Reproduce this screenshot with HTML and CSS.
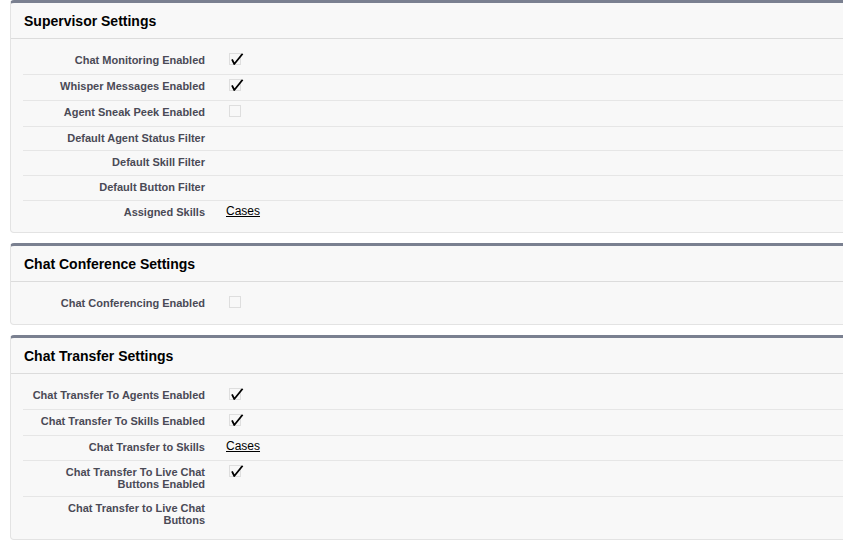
FILE: index.html
```html
<!DOCTYPE html>
<html lang="en">
<head>
    <meta charset="UTF-8">
    <title>Live Agent Settings</title>
    <link rel="stylesheet" href="styles.css">
</head>
<body>

    <div class="panel">
        <div class="panel-header"><h2>Supervisor Settings</h2></div>
        <div class="panel-body">
            <div class="row">
                <div class="label">Chat Monitoring Enabled</div>
                <div class="data"><span class="check on"></span></div>
            </div>
            <div class="row">
                <div class="label">Whisper Messages Enabled</div>
                <div class="data"><span class="check on"></span></div>
            </div>
            <div class="row">
                <div class="label">Agent Sneak Peek Enabled</div>
                <div class="data"><span class="check"></span></div>
            </div>
            <div class="row">
                <div class="label">Default Agent Status Filter</div>
                <div class="data"></div>
            </div>
            <div class="row">
                <div class="label">Default Skill Filter</div>
                <div class="data">&nbsp;</div>
            </div>
            <div class="row">
                <div class="label">Default Button Filter</div>
                <div class="data">&nbsp;</div>
            </div>
            <div class="row">
                <div class="label">Assigned Skills</div>
                <div class="data"><a href="#">Cases</a></div>
            </div>
        </div>
    </div>

    <div class="panel">
        <div class="panel-header"><h2>Chat Conference Settings</h2></div>
        <div class="panel-body">
            <div class="row">
                <div class="label">Chat Conferencing Enabled</div>
                <div class="data"><span class="check"></span></div>
            </div>
        </div>
    </div>

    <div class="panel">
        <div class="panel-header"><h2>Chat Transfer Settings</h2></div>
        <div class="panel-body">
            <div class="row">
                <div class="label">Chat Transfer To Agents Enabled</div>
                <div class="data"><span class="check on"></span></div>
            </div>
            <div class="row">
                <div class="label">Chat Transfer To Skills Enabled</div>
                <div class="data"><span class="check on"></span></div>
            </div>
            <div class="row">
                <div class="label">Chat Transfer to Skills</div>
                <div class="data"><a href="#">Cases</a></div>
            </div>
            <div class="row">
                <div class="label">Chat Transfer To Live Chat Buttons Enabled</div>
                <div class="data"><span class="check on"></span></div>
            </div>
            <div class="row">
                <div class="label">Chat Transfer to Live Chat Buttons</div>
                <div class="data"></div>
            </div>
        </div>
    </div>

    <script>
        // draw the checkbox images
        const box = '<rect x="3.5" y="1.5" width="11" height="11" fill="none" stroke="#c4c4c4" stroke-dasharray="1 1"/>';
        const tick = '<path d="M6 7.4 L8.3 12 L16.6 1.8" fill="none" stroke="#000" stroke-width="1.8" stroke-linejoin="round"/>';

        document.querySelectorAll('.check').forEach(el => {
            const mark = el.classList.contains('on') ? tick : '';
            el.innerHTML = `<svg width="20" height="16" viewBox="0 0 20 16">${box}${mark}</svg>`;
        });
    </script>

</body>
</html>
```

FILE: styles.css
```css
* {
    box-sizing: border-box;
    margin: 0;
    padding: 0;
}
html, body {
    overflow: hidden;
}
body {
    background: #fff;
    font-family: "Liberation Sans", Arial, sans-serif;
    padding-left: 10px;
}
.panel {
    margin-right: -20px;
    margin-bottom: 10px;
    background: #f8f8f8;
    border: 1px solid #e3e3e3;
    border-top: 3px solid #7a8090;
    border-radius: 4px;
}
.panel-header {
    display: flex;
    align-items: center;
    height: 36px;
    padding-left: 13px;
    border-bottom: 1px solid #dcdcdc;
}
.panel-header h2 {
    font-size: 14px;
    font-weight: bold;
    color: #000;
}
.panel-body {
    padding: 10px 0 7px 12px;
}
.row {
    display: flex;
    align-items: flex-start;
    padding: 3px 0 6px;
    border-bottom: 1px solid #e6e6e6;
}
.row:last-child {
    border-bottom: none;
}
.label {
    flex: 0 0 182px;
    padding: 2px 0 0 4px;
    text-align: right;
    font-size: 11px;
    line-height: 12px;
    font-weight: bold;
    color: #4a4a56;
}
.data {
    padding-left: 21px;
    font-size: 12px;
    line-height: 15px;
    color: #000;
}
.data a {
    color: #000;
    text-decoration: underline;
}
.check {
    display: block;
    height: 16px;
}
.check svg {
    display: block;
}
```
